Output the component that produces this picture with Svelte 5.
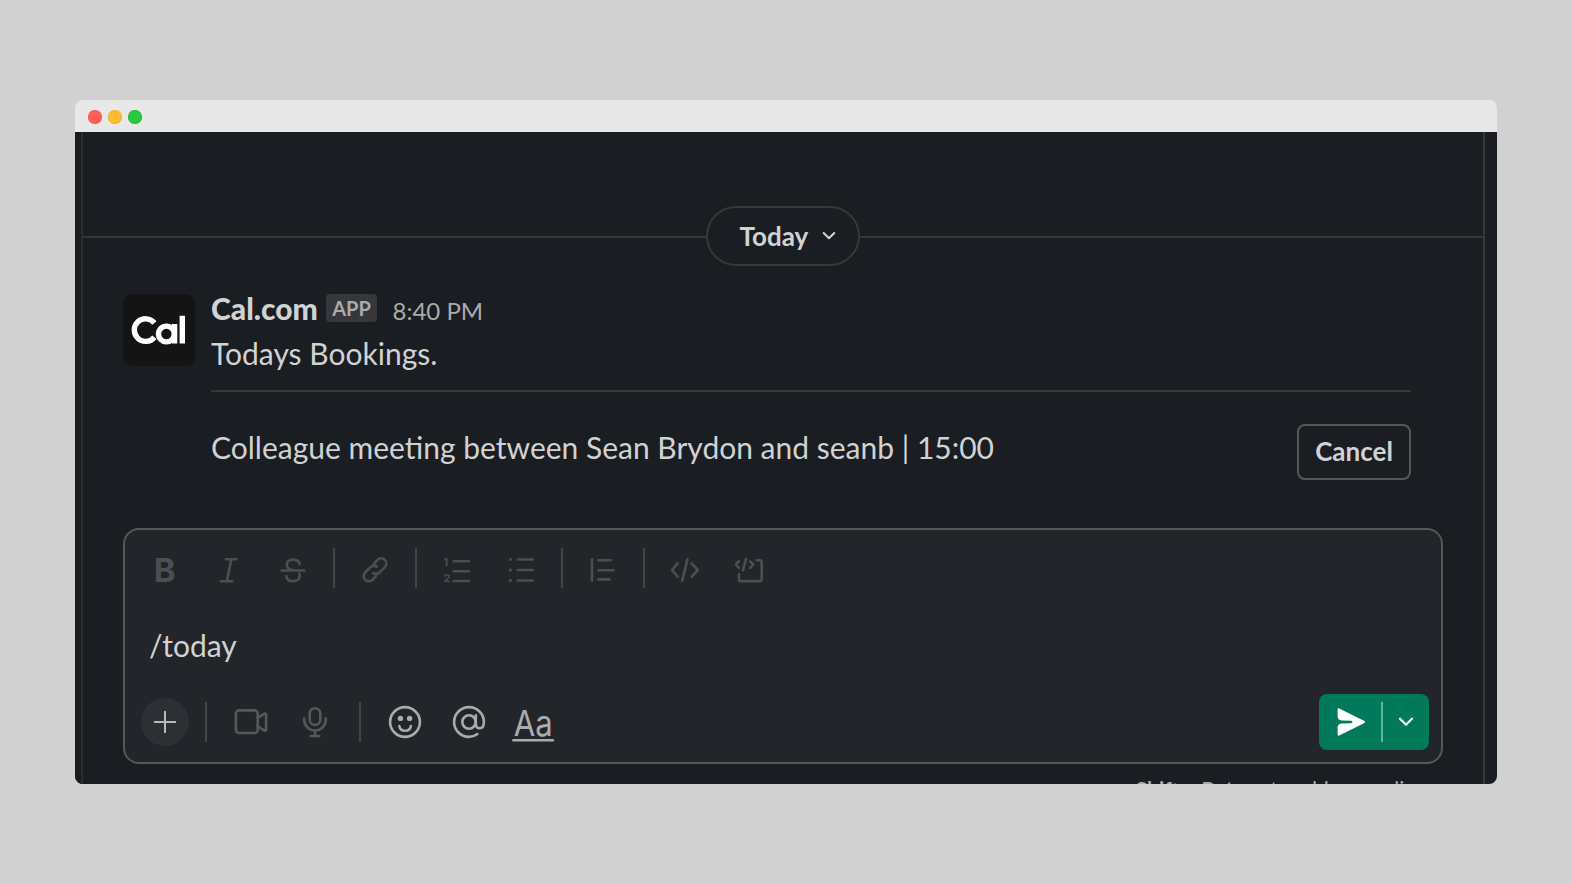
<script>
  const formatTools = [
    'bold', 'italic', 'strike', '|', 'link', '|', 'ordered', 'bullets', '|', 'quote', '|', 'code', 'codeblock'
  ];
</script>

<main class="stage">
  <section class="window">
    <header class="titlebar">
      <span class="light red"></span>
      <span class="light yellow"></span>
      <span class="light green"></span>
    </header>

    <div class="body">
      <div class="rail"></div>
      <div class="channel">
        <div class="day">
          <span class="rule"></span>
          <button class="pill">
            <span>Today</span>
            <svg width="14" height="10" viewBox="0 0 14 10"><path d="M1.7 2 7 7.3 12.3 2" /></svg>
          </button>
          <span class="rule"></span>
        </div>

        <article class="message">
          <div class="avatar">
            <svg width="72" height="72" viewBox="0 0 72 72" aria-label="Cal">
              <path d="M31.4 43.2A11.3 11.3 0 1 1 31.4 29" />
              <circle cx="43.4" cy="40" r="7.9" />
              <path d="M51.6 30V49.5M59.3 21.8V49.5" />
            </svg>
          </div>
          <div class="content">
            <div class="meta">
              <strong>Cal.com</strong>
              <span class="badge">APP</span>
              <time>8:40 PM</time>
            </div>
            <p>Todays Bookings.</p>
            <div class="divider"></div>
            <div class="booking">
              <p>Colleague meeting between Sean Brydon and seanb | 15:00</p>
              <button class="cancel">Cancel</button>
            </div>
          </div>
        </article>

        <div class="composer">
          <div class="format">
            {#each formatTools as tool}
              {#if tool === '|'}
                <span class="sep"></span>
              {:else}
                <button class="tool">
                  <svg width="40" height="40" viewBox="0 0 40 40">
                    {#if tool === 'bold'}
                      <text class="glyph b" x="8.8" y="34.3" textLength="21.8" lengthAdjust="spacingAndGlyphs">B</text>
                    {:else if tool === 'italic'}
                      <path d="M17 11.3H27.7M12 33.3H23.3M22.3 11.3 17.9 33.3" />
                    {:else if tool === 'strike'}
                      <path d="M8.7 22.5H31.3M26.7 16.2C26.2 13.2 23.6 11.6 20 11.6C16.3 11.6 13.7 13.6 13.7 16.6C13.7 19.4 15.6 21.2 20 22.4M13.3 28C13.7 31.2 16.4 33.2 20 33.2C24 33.2 26.8 31.1 26.8 27.8C26.8 26.9 26.6 26.2 26.2 25.6" />
                    {:else if tool === 'link'}
                      <path d="M18.7 18.3a5 5 0 0 1 .7-3.3l3.1-3.1a5.1 5.1 0 0 1 7.3 7.3l-5.3 5.4a5.1 5.1 0 0 1-6.3.5M21.4 25.4a5 5 0 0 1-.8 3.2l-3.1 3.2a5.1 5.1 0 0 1-7.3-7.3l5.3-5.4a5.1 5.1 0 0 1 6.3-.5" />
                    {:else if tool === 'ordered'}
                      <text class="glyph n" x="6.6" y="17.7">1</text>
                      <text class="glyph n" x="6.6" y="34.3">2</text>
                      <path d="M16.8 13.3H31.9M16.8 23.3H31.9M16.8 33H31.9" />
                    {:else if tool === 'bullets'}
                      <path d="M16.8 11.5H31.7M16.8 22H31.7M16.8 32.5H31.7" />
                      <g class="dots"><circle cx="9.4" cy="11.5" r="1.6" /><circle cx="9.4" cy="22" r="1.6" /><circle cx="9.4" cy="32.5" r="1.6" /></g>
                    {:else if tool === 'quote'}
                      <path d="M9 11.3V32.7M15.3 12.3H27.6M15.3 22.3H30.7M15.3 31.4H26.4" />
                    {:else if tool === 'code'}
                      <path d="M12.6 15.3 7 22 12.6 28.7M26.7 15.3 32.8 22 26.7 28.7M22.4 11.4 17.2 32.8" />
                    {:else}
                      <path d="M9.8 13.3 6.8 16.5 9.8 19.8M21.2 13.3 24.4 16.5 21.2 19.8M17 10.8 14 22.2M27.6 12.2H31Q32.7 12.2 32.7 13.9V31.3Q32.7 33.1 31 33.1H11.5Q10 33.1 10 31.5V26.2" />
                    {/if}
                  </svg>
                </button>
              {/if}
            {/each}
          </div>

          <div class="input">/today</div>

          <div class="actions">
            <button class="plus">
              <svg width="24" height="24" viewBox="0 0 24 24"><path d="M12 1.8V22.2M1.8 12H22.2" /></svg>
            </button>
            <span class="sep"></span>
            <button class="tool">
              <svg width="40" height="40" viewBox="0 0 40 40">
                <rect x="4.9" y="8.4" width="21.8" height="22.6" rx="3.2" />
                <path d="M26.7 15.8 33.2 11.9Q35.1 11.1 35.1 12.9V27.3Q35.1 29.3 33.2 28.4L26.7 24.4" />
              </svg>
            </button>
            <button class="tool">
              <svg width="40" height="40" viewBox="0 0 40 40">
                <rect x="14.7" y="6.2" width="10.6" height="16.8" rx="5.3" />
                <path d="M9.2 16.4V17.8A10.8 10.8 0 0 0 30.8 17.8V16.4M20 28.8V34M15.7 34H24.3" />
              </svg>
            </button>
            <span class="sep"></span>
            <button class="tool on">
              <svg width="40" height="40" viewBox="0 0 40 40">
                <circle cx="20" cy="20" r="14.9" />
                <path d="M14.3 24A5.9 5.9 0 0 0 25.9 24" />
                <g class="dots"><circle cx="15.4" cy="16.4" r="2.7" /><circle cx="24.6" cy="16.4" r="2.7" /></g>
              </svg>
            </button>
            <button class="tool on">
              <svg width="40" height="40" viewBox="0 0 40 40">
                <circle cx="20" cy="20" r="6.7" />
                <path d="M26.8 13.3V21.5C26.8 24.6 28.3 26.3 30.7 26.3C33.4 26.3 34.9 24 34.9 20A14.9 14.9 0 1 0 20 34.9C23.3 34.9 26 33.8 28.4 32" />
              </svg>
            </button>
            <button class="tool on">
              <svg width="40" height="40" viewBox="0 0 40 40">
                <text class="glyph a" x="0.8" y="33.6" textLength="39" lengthAdjust="spacingAndGlyphs">Aa</text>
                <path d="M.5 38.3H39.8" />
              </svg>
            </button>

            <div class="send">
              <button class="go">
                <svg width="40" height="40" viewBox="0 0 40 40">
                  <path d="M9.2 6.5 34 18.8Q36.2 20 34 21.2L9.2 33.5Q7.6 34.1 7.6 32.5V25.8Q7.6 21.8 11.6 21.6L21.2 21.2Q22.4 21 22.4 20T21.2 18.8L11.6 18.4Q7.6 18.2 7.6 14.2V7.5Q7.6 5.9 9.2 6.5Z" />
                </svg>
              </button>
              <span class="bar"></span>
              <button class="more">
                <svg width="16" height="12" viewBox="0 0 16 12"><path d="M2 2.7 8 8.7 14 2.7" /></svg>
              </button>
            </div>
          </div>
        </div>

        <footer class="hint"><b>Shift + Return</b> to add a new line</footer>
      </div>
    </div>
  </section>
</main>

<style>
  :global(body) { background: #d1d1d1; }
  * { box-sizing: border-box; }
  button { border: 0; padding: 0; background: none; font: inherit; color: inherit; }
  p { margin: 0; }
  svg { display: block; overflow: visible; fill: none; stroke: currentColor; stroke-width: 2.6; stroke-linecap: round; stroke-linejoin: round; }
  .stage { height: 884px; padding: 100px 75px; font-family: Lato, sans-serif; color: #d1d2d3; }
  .window { height: 684px; border-radius: 8px; overflow: hidden; background: linear-gradient(#e8e8e8 32px, #1a1d21 32px); display: flex; flex-direction: column; }
  .titlebar { height: 32px; flex: none; display: flex; align-items: center; gap: 6.6px; padding: 2px 0 0 13.3px; }
  .light { width: 13.4px; height: 13.4px; border-radius: 50%; }
  .red { background: #ff5f57; box-shadow: inset 0 0 0 1px #e9524a55; }
  .yellow { background: #febc2e; box-shadow: inset 0 0 0 1px #e0a02b66; }
  .green { background: #28c840; box-shadow: inset 0 0 0 1px #1eab3266; }
  .body { flex: 1; display: flex; min-height: 0; }
  .rail { width: 8px; background: #1b1a1f; border-right: 2px solid #2d2c31; }
  .channel { width: 1402px; border-right: 2px solid #35373b; padding-top: 74px; }
  .day { display: flex; align-items: center; height: 60px; }
  .rule { flex: 1; height: 2px; background: #35373b; margin-top: 2px; }
  .pill { width: 154px; height: 60px; border: 2px solid #35373b; border-radius: 30px; display: flex; align-items: center; padding-left: 31.5px; gap: 13.5px; font-size: 26px; font-weight: 700; }
  .pill svg { stroke-width: 2; margin-top: -1px; }
  .message { display: flex; padding: 20px 72px 0 40px; height: 262px; }
  .avatar { width: 72px; height: 72px; margin: 8px 16px 0 0; border-radius: 9px; background: #141414; color: #fff; }
  .avatar svg { stroke-width: 5.4; stroke-linecap: butt; }
  .content { flex: 1; font-size: 30px; line-height: 44px; }
  .content p { height: 44px; line-height: 46px; }
  .meta { display: flex; height: 44px; }
  .meta strong { font-weight: 900; width: 115px; white-space: nowrap; line-height: 45px; }
  .badge { width: 51px; height: 28px; margin: 8px 15.5px 0 0; border-radius: 4px; background: #35373b; color: #ababad; font-size: 20px; line-height: 29px; font-weight: 700; text-align: center; }
  time { font-size: 24px; color: #ababad; line-height: 50px; }
  .divider { height: 2px; background: #35373b; margin: 16px 0 32px; }
  .booking { display: flex; justify-content: space-between; }
  .cancel { width: 114px; height: 56px; border: 2px solid #565759; border-radius: 8px; font-size: 26px; font-weight: 700; line-height: 50px; padding-bottom: 2px; }
  .composer { margin: 0 40px; height: 236px; border: 2px solid #565856; border-radius: 16px; background: #222529; }
  .format, .actions { display: flex; align-items: center; padding-left: 8px; }
  .format { height: 76px; color: #4c4f52; }
  .tool { width: 64px; height: 56px; display: grid; place-items: center; }
  .sep { width: 18px; height: 40px; background: linear-gradient(#424548, #424548) center / 2px 100% no-repeat; }
  .dots, .glyph { fill: currentColor; stroke: none; }
  .glyph { font-family: Inter, sans-serif; }
  .b { font-size: 33px; font-weight: 700; }
  .n { font-size: 10.8px; font-weight: 700; }
  .a { font-size: 36px; font-weight: 400; }
  .input { height: 76px; padding: 16px 24px; font-size: 30px; line-height: 46px; }
  .actions { height: 80px; color: #55585b; padding-right: 12px; }
  .actions .sep { width: 26px; }
  .plus { width: 48px; height: 48px; margin: 0 4px 0 8px; border-radius: 50%; background: #2d2f34; color: #b9babd; display: grid; place-items: center; }
  .plus svg { stroke-width: 2; }
  .on { color: #ababad; }
  .send { margin-left: auto; width: 110px; height: 56px; background: #007a5a; border-radius: 8px; display: flex; align-items: center; color: #fff; }
  .go { width: 62px; display: grid; place-items: center; }
  .go svg { fill: #fff; stroke: none; }
  .bar { width: 2px; height: 40px; background: #66af9c; }
  .more { width: 46px; display: grid; place-items: center; }
  .more svg { stroke-width: 2.2; }
  .hint { padding: 10px 56px 0 0; text-align: right; font-size: 21px; line-height: 30px; color: #ababad; }
</style>
